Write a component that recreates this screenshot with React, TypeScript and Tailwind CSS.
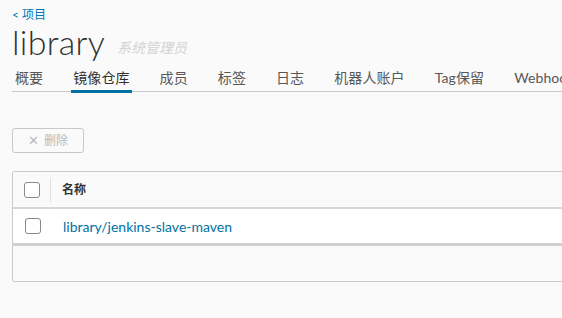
import React from 'react';

const tabs = ['概要', '镜像仓库', '成员', '标签', '日志', '机器人账户', 'Tag保留', 'Webhooks'];

export default function App() {
  const font = { fontFamily: 'Lato, "Noto Sans CJK SC", sans-serif' };
  return (
    <div className="w-[562px] h-[318px] overflow-hidden bg-[#fafafa] text-[#565656]" style={font}>
      <div className="pl-3 pt-[7px]">
        <a className="block text-[12px] leading-[16px] text-[#0079b8]">&lt; 项目</a>
        <div className="flex items-end mt-[2px] h-[34px]">
          <h1 className="text-[34px] leading-[34px] font-light text-[#313131] tracking-[0.3px]">library</h1>
          <span className="ml-[12px] mb-[1px] text-[14px] italic text-[#d3d3d3]">系统管理员</span>
        </div>
        <nav className="mt-[10px] flex h-[23px] border-b border-[#cccccc] whitespace-nowrap">
          {tabs.map((t, i) => (
            <div
              key={t}
              className={`relative mr-[30px] text-[14px] leading-[18px] tracking-[0.1px] ${i === 0 ? 'ml-[3px]' : ''} ${i === 1 ? 'text-[#313131]' : 'text-[#575757]'}`}
            >
              {t}
              {i === 1 && <div className="absolute left-[-2px] right-[-2px] top-[21px] h-[3px] bg-[#0072a3]" />}
            </div>
          ))}
        </nav>
        <button className="mt-[36px] flex items-center h-[25px] w-[72px] justify-center border border-[#c8c8c8] rounded-[3px] text-[12px] text-[#b9b9b9] bg-[#fafafa]">
          <span className="mr-[5px] text-[13px]">✕</span>删除
        </button>
        <div className="mt-[18px] border border-[#cccccc] border-r-0 rounded-l-[3px] overflow-hidden">
          <div className="flex items-center h-[37px] bg-[#fafafa] border-b-2 border-[#d7d7d7]">
            <div className="w-[38px] h-[24px] flex justify-end border-r border-[#e0e0e0]">
              <div className="w-[16px] h-[16px] mt-[4px] mr-[10px] border border-[#888] rounded-[3px] bg-white" />
            </div>
            <span className="ml-[11px] text-[12px] font-bold text-[#333]">名称</span>
          </div>
          <div className="flex items-center h-[37px] bg-white border-b-[3px] border-[#d0d0d0]">
            <div className="w-[38px] flex justify-end">
              <div className="w-[16px] h-[16px] mr-[10px] border border-[#888] rounded-[3px] bg-white" />
            </div>
            <a className="ml-[12px] text-[14px] text-[#0072a3]">library/jenkins-slave-maven</a>
          </div>
          <div className="h-[35px] bg-[#fafafa]" />
        </div>
      </div>
    </div>
  );
}
